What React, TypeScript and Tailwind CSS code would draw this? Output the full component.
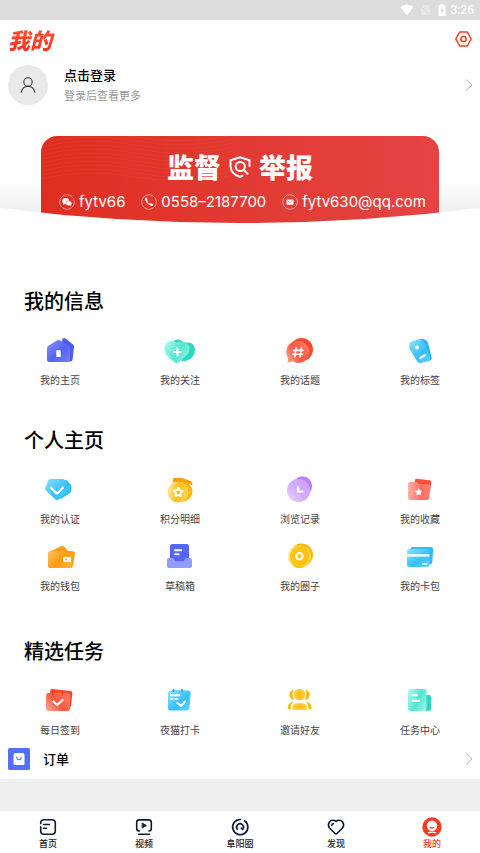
import React from 'react';

interface Entry {
  label: string;
  icon: React.ReactNode;
}

interface Section {
  title: string;
  spacing: string;
  entries: Entry[];
}

const Gradients: React.FC = () => (
  <svg className="absolute w-0 h-0" aria-hidden="true">
    <defs>
      <linearGradient id="blue" x1="0" y1="0" x2="1" y2="1"><stop offset="0" stopColor="#8a93fb" /><stop offset="0.55" stopColor="#5562f2" /><stop offset="1" stopColor="#7580fb" /></linearGradient>
      <linearGradient id="mint" x1="0" y1="0.2" x2="1" y2="0.7"><stop offset="0" stopColor="#a5f8e8" /><stop offset="0.55" stopColor="#53e5d0" /><stop offset="1" stopColor="#8df5e4" /></linearGradient>
      <linearGradient id="red" x1="0" y1="0.8" x2="1" y2="0.2"><stop offset="0" stopColor="#ff9d90" /><stop offset="0.45" stopColor="#fb5840" /><stop offset="1" stopColor="#ff7a64" /></linearGradient>
      <linearGradient id="pink" x1="0" y1="0.5" x2="1" y2="0.5"><stop offset="0" stopColor="#ffb0a8" /><stop offset="0.6" stopColor="#fd6d62" /><stop offset="1" stopColor="#ff8078" /></linearGradient>
      <linearGradient id="sky" x1="0" y1="0" x2="1" y2="1"><stop offset="0" stopColor="#8ce3ff" /><stop offset="0.6" stopColor="#35bff8" /><stop offset="1" stopColor="#5fd4ff" /></linearGradient>
      <linearGradient id="gold" x1="0" y1="0.4" x2="1" y2="0.6"><stop offset="0" stopColor="#ffe9a4" /><stop offset="0.5" stopColor="#fdc115" /><stop offset="1" stopColor="#ffd65c" /></linearGradient>
      <radialGradient id="amber" cx="0.5" cy="0.5" r="0.6"><stop offset="0" stopColor="#fbb910" /><stop offset="1" stopColor="#ffd452" /></radialGradient>
      <linearGradient id="orange" x1="0" y1="0" x2="1" y2="0.6"><stop offset="0" stopColor="#ffc062" /><stop offset="0.6" stopColor="#fc9d10" /><stop offset="1" stopColor="#ffae30" /></linearGradient>
      <linearGradient id="violet" x1="0" y1="1" x2="1" y2="0"><stop offset="0" stopColor="#ead6ff" /><stop offset="0.5" stopColor="#d3abfb" /><stop offset="1" stopColor="#cb9cf9" /></linearGradient>
    </defs>
  </svg>
);

const EntryIcon: React.FC<{ children: React.ReactNode }> = ({ children }) => (
  <svg className="w-8 h-7" viewBox="0 0 32 28" fill="none" strokeLinecap="round" strokeLinejoin="round" aria-hidden="true">{children}</svg>
);

const sections: Section[] = [
  {
    title: '我的信息',
    spacing: 'mb-[38px]',
    entries: [
      {
        label: '我的主页',
        icon: (
          <EntryIcon>
            <path d="M18.5 1.6Q20 0.6 21.5 1.6L29 7.6Q30.2 8.6 30 10L28.6 22.5Q28.3 24.5 26.5 24.5H16Z" fill="#4f5ae8" />
            <path d="M12.8 3.6Q14.5 2.6 16.2 3.6L24.6 8.8Q26 9.7 26 11.3V22.5Q26 25 23.5 25H5.5Q3 25 3 22.5V11.3Q3 9.7 4.4 8.8Z" fill="url(#blue)" />
            <rect x="12.3" y="13.3" width="4.4" height="6.8" rx="0.6" fill="#fff" />
          </EntryIcon>
        ),
      },
      {
        label: '我的关注',
        icon: (
          <EntryIcon>
            <path d="M9 4.5Q12 1.5 16.5 3L20 6.5Q26 4 29.5 8Q32.5 12.5 29.5 18.5Q27 23.5 18 24.5Z" fill="#2ed8bf" />
            <path d="M13 6C9.5 3 4.5 3.6 2 7C-0.5 10.5 0 15 3 18.5L10.5 25.3Q12.8 27 15 25.3L22.5 18.5C26 15 26.3 10 23.5 7C20.5 3.5 16 3.3 13 6Z" fill="url(#mint)" />
            <path d="M13.5 11.5V18.5M10 15H17" stroke="#fff" strokeWidth="2.2" />
          </EntryIcon>
        ),
      },
      {
        label: '我的话题',
        icon: (
          <EntryIcon>
            <circle cx="17.5" cy="12.5" r="11.5" fill="#f8492c" />
            <path d="M13.5 4A11 11 0 1 1 8.5 24.3Q6 25.8 3.2 25.6Q4.4 23.5 3.9 20.8A11 11 0 0 1 13.5 4Z" fill="url(#red)" />
            <path d="M12.2 10.5L10.7 20M17.5 10.5L16 20M9.4 13.4H19.2M8.8 17.2H18.6" stroke="#fff" strokeWidth="1.6" />
          </EntryIcon>
        ),
      },
      {
        label: '我的标签',
        icon: (
          <EntryIcon>
            <path d="M14 3.5Q17.5 1 21.5 3Q23.5 4 24 6L27.6 20.5Q28 23 25.5 23.7L17 25.5Z" fill="#25b3f2" />
            <path d="M7.3 4.7L14.5 2.3Q16.3 1.8 17.5 3L21 6.5Q21.7 7.2 22 8.3L26 21Q26.5 23.2 24.5 24L16.5 26Q14.3 26.4 13.3 24.5L5.7 12Q5 10.8 5.2 9.5L5.8 6.3Q6 5.1 7.3 4.7Z" fill="url(#sky)" />
            <circle cx="13" cy="10.5" r="2" fill="#fff" />
            <path d="M16.2 21L20.6 18.4" stroke="#fff" strokeWidth="2.2" />
          </EntryIcon>
        ),
      },
    ],
  },
  {
    title: '个人主页',
    spacing: 'mb-[43px]',
    entries: [
      {
        label: '我的认证',
        icon: (
          <EntryIcon>
            <path d="M13 4H21Q22.5 4 23.5 5L27 9Q27.7 10 27.6 11.5L27.3 14.5Q27.2 16 26 17L18.5 22Q16 23.5 14 22Z" fill="#2cc4ee" />
            <path d="M6 3H18.5Q20 3 21 4.2L25 10.5Q25.7 12 24.5 13.3L15 23.5Q13.2 25 11.4 23.5L1.8 14.5Q0.7 13.3 1.3 12L4 4.5Q4.6 3 6 3Z" fill="url(#sky)" />
            <path d="M7 11.5L11.8 16.7Q13 17.8 14.2 16.7L19 11.5" stroke="#fff" strokeWidth="2.3" />
          </EntryIcon>
        ),
      },
      {
        label: '积分明细',
        icon: (
          <EntryIcon>
            <path d="M9.5 2H18.5L27.5 5.5Q28.8 6.2 28.2 9L23 7.5L8.2 5.5Z" fill="#fb9d12" />
            <circle cx="18.5" cy="15.5" r="10" fill="#fcb80c" />
            <circle cx="14" cy="16" r="10.5" fill="url(#gold)" />
            <path d="M14.3 11.7L15.7 14.2L18.5 14.9L16.7 17.1L17 20L14.3 18.9L11.5 20L11.9 17.1L10 14.9L12.8 14.2Z" stroke="#fff" strokeWidth="1.9" />
          </EntryIcon>
        ),
      },
      {
        label: '浏览记录',
        icon: (
          <EntryIcon>
            <circle cx="18.5" cy="10" r="9.7" fill="#b981f3" />
            <circle cx="14.5" cy="14.5" r="11.5" fill="url(#violet)" />
            <path d="M14 11V15.5H18.6" stroke="#fff" strokeWidth="2.2" />
          </EntryIcon>
        ),
      },
      {
        label: '我的收藏',
        icon: (
          <EntryIcon>
            <path d="M12.5 2.8L25.5 4.3Q27.5 4.6 27.3 6.5L26 16L10.5 9L11 4Q11.3 2.7 12.5 2.8Z" fill="#f94f3c" />
            <path d="M6 6H12Q13.2 6 14 6.9L15 8H24.5Q26.3 8 26.2 10L25.5 22Q25.3 24 23.3 24H6Q4 24 4 22V8Q4 6 6 6Z" fill="url(#pink)" />
            <path d="M14.7 12.7L15.7 14.8L18 15.1L16.3 16.7L16.8 19L14.7 17.9L12.6 19L13.1 16.7L11.4 15.1L13.7 14.8Z" fill="#fff" stroke="#fff" strokeWidth="0.6" />
          </EntryIcon>
        ),
      },
      {
        label: '我的钱包',
        icon: (
          <EntryIcon>
            <path d="M5 9L17 3.3Q19 2.4 20.5 3.8L24 8L29 8.3Q31.2 8.6 31 10.7L29 22.5Q28.7 25 26 25H10Z" fill="#fb9d12" />
            <path d="M6 8.3H26.5Q28.7 8.3 28.5 10.5L28 23Q27.8 25 25.8 25H6Q4 25 4 23V10.3Q4 8.3 6 8.3Z" fill="url(#orange)" />
            <path d="M20.5 14H27V19H20.5Q19.2 19 19.2 17.7V15.3Q19.2 14 20.5 14Z" fill="#fff" />
            <circle cx="22.2" cy="16.5" r="1" fill="#fba21d" />
          </EntryIcon>
        ),
      },
      {
        label: '草稿箱',
        icon: (
          <EntryIcon>
            <rect x="6" y="1" width="19" height="20" rx="2.5" fill="#5665f6" />
            <path d="M5 15H8.5Q9.5 15 10 16L10.6 17.3Q11 18.2 12 18.2H19Q20 18.2 20.4 17.3L21 16Q21.5 15 22.5 15H26Q28 15 28 17V23Q28 25 26 25H5Q3 25 3 23V17Q3 15 5 15Z" fill="#929cfc" />
            <path d="M11 7.2H17.3M11 11.2H14.7" stroke="#fff" strokeWidth="1.9" />
          </EntryIcon>
        ),
      },
      {
        label: '我的圈子',
        icon: (
          <EntryIcon>
            <circle cx="17.5" cy="12" r="11.5" fill="#fbb80a" />
            <circle cx="15.5" cy="13.5" r="11.5" fill="url(#gold)" />
            <circle cx="15.5" cy="13.2" r="9.5" fill="#fec414" />
            <circle cx="15.5" cy="13.2" r="3.2" stroke="#fff" strokeWidth="2" />
          </EntryIcon>
        ),
      },
      {
        label: '我的卡包',
        icon: (
          <EntryIcon>
            <path d="M9 4H27Q29.2 4 29.1 6.3L28.3 19Q28 21.2 26 21.5L8 22L6 7Q6.5 4 9 4Z" fill="#2dbcf5" />
            <rect x="3" y="6" width="22.5" height="18" rx="2.5" fill="url(#sky)" />
            <path d="M3 11.2H25.5V13.6H3Z" fill="#fff" />
            <path d="M18 20H23.3V21.8H18Z" fill="#fff" />
          </EntryIcon>
        ),
      },
    ],
  },
  {
    title: '精选任务',
    spacing: 'mb-0.5',
    entries: [
      {
        label: '每日签到',
        icon: (
          <EntryIcon>
            <path d="M8 2L26.5 4Q28.6 4.3 28.4 6.5L27 19Q26.5 21 24.5 21L6 17L6.2 4Q6.4 2 8 2Z" fill="#f8492c" />
            <rect x="2" y="6" width="24" height="18" rx="2.8" fill="url(#red)" />
            <path d="M8.7 4.5V7.5M18.5 4.5V7.5" stroke="#e93b20" strokeWidth="1.6" />
            <path d="M9.5 14.5L13.2 18L18.5 13" stroke="#fff" strokeWidth="2.2" />
          </EntryIcon>
        ),
      },
      {
        label: '夜猫打卡',
        icon: (
          <EntryIcon>
            <path d="M8 3L25 3.5Q27 3.7 26.8 6L25.5 21Q25 23 23 23H8Z" fill="#5acdfa" />
            <rect x="4" y="4" width="21" height="19.5" rx="2.5" fill="url(#sky)" />
            <path d="M9.5 2.5V4.5M18 2.5V4.5" stroke="#1ba9e8" strokeWidth="1.6" />
            <path d="M7 8.2H15.3M7 12H8.5M11.5 12H13.5" stroke="#fff" strokeWidth="1.9" />
            <path d="M13.5 16L17 19L21 14.5" stroke="#fff" strokeWidth="2.1" />
          </EntryIcon>
        ),
      },
      {
        label: '邀请好友',
        icon: (
          <EntryIcon>
            <path d="M9 3.3Q5.5 4.5 5.7 8Q5.9 11.5 9.6 13Q7.5 8 9 3.3ZM22 3.3Q25.6 4.5 25.4 8Q25.2 11.5 21.5 13Q23.5 8 22 3.3Z" fill="#f9b80d" stroke="#f9b80d" strokeWidth="0.6" />
            <rect x="10" y="2" width="11.2" height="11.5" rx="5" fill="url(#amber)" />
            <path d="M11.5 16.2H19.5Q22.3 17 23 20.5V22Q22.8 23 21.5 23H9.7Q8.4 23 8.2 22V20.5Q8.8 17 11.5 16.2Z" fill="url(#amber)" />
            <path d="M8.2 15.2Q4.3 16 4 20.5Q4 22.5 6.2 22.3Q6.2 18 8.2 15.2ZM23 15.2Q27 16 27.3 20.5Q27.3 22.5 25 22.3Q25 18 23 15.2Z" fill="#f9b80d" stroke="#f9b80d" strokeWidth="0.6" />
          </EntryIcon>
        ),
      },
      {
        label: '任务中心',
        icon: (
          <EntryIcon>
            <path d="M19 8H25Q27.2 8 27.2 10.2V21.5Q27.2 23.7 25 23.7H18Z" fill="#2fd6bd" />
            <rect x="4" y="2" width="18.5" height="22" rx="2.2" fill="url(#mint)" />
            <path d="M8.7 8.2H13M8.7 13.8H15.2" stroke="#fff" strokeWidth="2.1" />
          </EntryIcon>
        ),
      },
    ],
  },
];

const NavIcon: React.FC<{ children: React.ReactNode }> = ({ children }) => (
  <svg className="w-5 h-5" viewBox="0 0 20 20" fill="none" stroke="#111a33" strokeWidth="1.6" strokeLinecap="round" strokeLinejoin="round" aria-hidden="true">{children}</svg>
);

const tabs = [
  {
    label: '首页',
    active: false,
    icon: (
      <NavIcon>
        <path d="M2.7 6.5V6Q2.7 2.7 6 2.7H14Q17.3 2.7 17.3 6V14Q17.3 17.3 14 17.3H6Q2.7 17.3 2.7 14V9.8M5.5 7.5H11.5M5.5 11.3H8.5" />
      </NavIcon>
    ),
  },
  {
    label: '视频',
    active: false,
    icon: (
      <NavIcon>
        <path d="M5.5 14H5Q2.7 14 2.7 11.5V5.5Q2.7 2.9 5.3 2.9H14.7Q17.3 2.9 17.3 5.5V11.5Q17.3 14 15 14M4.5 17.2H15.5" />
        <path d="M8.5 6.2L12.3 8.5L8.5 10.8Z" fill="#111a33" strokeWidth="1" />
      </NavIcon>
    ),
  },
  {
    label: '阜阳圈',
    active: false,
    icon: (
      <NavIcon>
        <path d="M10.5 2.5A7.6 7.6 0 1 0 14.5 3.8" strokeWidth="1.7" />
        <path d="M7.3 12.2A3.4 3.4 0 1 1 12.6 12.4L11.2 11" />
      </NavIcon>
    ),
  },
  {
    label: '发现',
    active: false,
    icon: (
      <NavIcon>
        <path d="M10 4.5L8.8 3.6Q5.5 2.4 3.4 5Q1.5 8 3.3 10.8L9 16.5Q10 17.3 11 16.5L16.7 10.8Q18.6 8 16.6 5Q14.5 2.4 11.2 3.6L10 4.5M5.7 8.5Q5.9 6.8 7.4 6.6" />
      </NavIcon>
    ),
  },
  {
    label: '我的',
    active: true,
    icon: (
      <svg className="w-5 h-5" viewBox="0 0 20 20" fill="none" strokeLinecap="round" aria-hidden="true">
        <circle cx="10" cy="10" r="9.7" fill="#fb3a20" />
        <circle cx="10" cy="8.8" r="5.2" fill="#fff" />
        <path d="M8.2 10.3Q10 11.8 11.8 10.3" stroke="#fb3a20" strokeWidth="1.2" />
        <path d="M6.5 15.7Q10 14.7 13.5 15.7" stroke="#fff" strokeWidth="1.3" />
      </svg>
    ),
  },
];

const Chevron: React.FC = () => (
  <svg className="w-2 h-3 shrink-0" viewBox="0 0 8 12" fill="none" stroke="#b5b5b5" strokeWidth="1" aria-hidden="true">
    <path d="M1 0.5L7 6L1 11.5" />
  </svg>
);

const StatusBar: React.FC = () => (
  <div className="h-5 bg-[#dcdcdc] flex items-center justify-end pr-1.5 text-white">
    <svg className="w-3.5 h-3 mr-1.5" viewBox="0 0 14 12" fill="#fff" aria-hidden="true"><path d="M0.5 3Q7 -2 13.5 3L7 11.5Z" /></svg>
    <svg className="w-2.5 h-3 mr-2" viewBox="0 0 10 12" aria-hidden="true">
      <path d="M4 1H9.5V11H1V4Z" fill="#e6e6e6" />
      <path d="M1 2L9 11" stroke="#d5d5d5" />
    </svg>
    <svg className="w-2 h-3 mr-1" viewBox="0 0 8 12" aria-hidden="true">
      <path d="M2.5 0H5.5V1.2H7.5V12H0.5V1.2H2.5Z" fill="#fff" />
      <path d="M4.8 3L2.3 7H4L3.4 10L5.9 6H4.2Z" fill="#d0d0d0" />
    </svg>
    <span className="font-['Roboto',sans-serif] text-xs leading-5 font-medium">3:26</span>
  </div>
);

const Banner: React.FC = () => (
  <section className="pb-[26px]">
    <div className="pt-[26px] bg-linear-to-b from-white from-60% to-[#e8e8e8]">
      <div className="relative overflow-hidden mx-[41px] rounded-t-[16px] bg-linear-to-r from-[#df2e20] to-[#e44443] text-white pt-[15px] pb-[13px]">
        <svg className="absolute left-0 top-0 w-1/2 h-11" viewBox="0 0 200 44" preserveAspectRatio="none" fill="none" stroke="#f0552f" strokeOpacity="0.35" strokeWidth="0.6" aria-hidden="true">
          {[0, 4, 8, 12, 16, 20, 24, 28, 32, 36, 40].map((y) => (
            <path key={y} d={`M0 ${y + 3}Q45 ${y - 8} 95 ${y + 1}T200 ${y - 2}`} />
          ))}
        </svg>
        <h2 className="relative flex items-center justify-center gap-2 text-[27px] leading-8 font-black">
          <span>监督</span>
          <svg className="w-[22px] h-[22px]" viewBox="0 0 22 22" fill="none" stroke="#fff" strokeWidth="2" strokeLinecap="round" strokeLinejoin="round" aria-hidden="true">
            <path d="M20.5 10V4.3L11 1.2L1.5 4.3V10Q1.5 17.8 11 21L13.5 19.7" />
            <circle cx="11.3" cy="10.5" r="4.6" />
            <path d="M14.7 14L18.5 17.8" />
          </svg>
          <span>举报</span>
        </h2>
        <div className="relative mt-2 pl-[18px] pr-[13px] flex justify-between font-['Inter','Liberation_Sans',sans-serif] text-[15px] leading-[22px]">
          <span className="flex items-center gap-1">
            <svg className="w-4 h-4" viewBox="0 0 16 16" fill="none" aria-hidden="true">
              <circle cx="8" cy="8" r="7.3" stroke="#fff" strokeOpacity="0.6" strokeWidth="0.8" />
              <ellipse cx="6.7" cy="7" rx="3.5" ry="3" fill="#fff" />
              <ellipse cx="9.8" cy="9.3" rx="3" ry="2.5" fill="#fff" stroke="#e0352a" strokeWidth="0.5" />
              <path d="M4.5 9L4.3 11L6.5 9.7M11 11L12.2 12.2L12 10.5" fill="#fff" />
            </svg>
            fytv66
          </span>
          <span className="flex items-center gap-1">
            <svg className="w-4 h-4" viewBox="0 0 16 16" fill="none" aria-hidden="true">
              <circle cx="8" cy="8" r="7.3" stroke="#fff" strokeOpacity="0.6" strokeWidth="0.8" />
              <path d="M5 5.2Q5.5 9.8 10.8 11" stroke="#fff" strokeWidth="1.3" />
              <path d="M5 4.5L5.6 6.5M9.4 10.4L11.3 11" stroke="#fff" strokeWidth="2" strokeLinecap="round" />
            </svg>
            0558–2187700
          </span>
          <span className="flex items-center gap-1">
            <svg className="w-4 h-4" viewBox="0 0 16 16" fill="none" aria-hidden="true">
              <circle cx="8" cy="8" r="7.3" stroke="#fff" strokeOpacity="0.6" strokeWidth="0.8" />
              <rect x="4.5" y="5.5" width="7" height="5.2" rx="0.7" fill="#fff" />
              <path d="M5.5 6.5L8 8.5L10.5 6.5" stroke="#e0352a" strokeWidth="0.5" />
            </svg>
            fytv630@qq.com
          </span>
        </div>
      </div>
    </div>
    {/* white arc that closes off the lower edge of the card */}
    <svg className="relative block w-full h-[52px] -mt-[18px]" viewBox="0 0 480 52" preserveAspectRatio="none" aria-hidden="true">
      <path d="M0 0Q240 30 480 0V52H0Z" fill="#fff" />
    </svg>
  </section>
);

const App: React.FC = () => (
  <div className="min-h-screen flex flex-col bg-white text-black font-['Noto_Sans_CJK_SC',sans-serif]">
    <Gradients />
    <StatusBar />
    <header className="h-10 px-2 pb-0.5 flex items-center justify-between">
      <h1 className="pr-1 text-[22px] leading-8 font-black italic text-transparent bg-clip-text bg-linear-to-b from-[#ff5a3c] to-[#f5290f]">我的</h1>
      <button type="button" aria-label="设置">
        <svg className="w-[17px] h-4" viewBox="0 0 17 16" fill="none" stroke="#fb3a20" strokeWidth="1.5" strokeLinejoin="round">
          <path d="M4.7 1H12.3L16.2 8L12.3 15H4.7L0.8 8Z" />
          <circle cx="8.5" cy="8" r="2.6" />
        </svg>
      </button>
    </header>

    <button type="button" className="h-[50px] pl-2 pr-[7px] flex items-center text-left">
      <span className="w-10 h-10 rounded-full bg-[#e9e9e9] flex items-center justify-center">
        <svg className="w-4 h-4" viewBox="0 0 16 16" fill="none" stroke="#333" strokeWidth="1.1" strokeLinecap="round" aria-hidden="true">
          <circle cx="8" cy="5" r="4.2" />
          <path d="M1.2 15.3Q2.2 9.3 8 9.2Q13.8 9.3 14.8 15.3" />
        </svg>
      </span>
      <span className="ml-4 flex-1 flex flex-col">
        <span className="text-[13px] leading-5 font-medium">点击登录</span>
        <span className="text-[11px] leading-5 text-[#999]">登录后查看更多</span>
      </span>
      <Chevron />
    </button>

    <Banner />

    <main>
      {sections.map((section) => (
        <section key={section.title} className={section.spacing}>
          <h2 className="pl-6 text-xl leading-[30px] font-medium">{section.title}</h2>
          <div className="mt-[21px] grid grid-cols-4 gap-y-[17px]">
            {section.entries.map((entry) => (
              <button key={entry.label} type="button" className="flex flex-col items-center gap-2">
                {entry.icon}
                <span className="text-[10px] leading-[14px] text-[#444]">{entry.label}</span>
              </button>
            ))}
          </div>
        </section>
      ))}
    </main>

    <button type="button" className="h-10 pl-2 pr-[7px] flex items-center text-left">
      <svg className="w-[22px] h-[22px]" viewBox="0 0 22 22" fill="none" aria-hidden="true">
        <rect width="22" height="22" rx="1.5" fill="#5470fb" />
        <path d="M6.7 5H15.3L16.5 6.7V15.5Q16.5 17 15 17H7Q5.5 17 5.5 15.5V6.7Z" fill="#fff" />
        <path d="M8.7 9.3Q9 11.7 11 11.7Q13 11.7 13.3 9.3" stroke="#5470fb" strokeWidth="1.2" strokeLinecap="round" />
      </svg>
      <span className="ml-[13px] flex-1 text-[13px] leading-5 font-medium">订单</span>
      <Chevron />
    </button>

    <div className="flex-1 min-h-8 bg-[#efefef]" />

    <nav className="grid grid-cols-5 pt-[5px] pb-[3px] border-t border-[#f5f5f5]">
      {tabs.map((tab) => (
        <a key={tab.label} href="#" aria-current={tab.active ? 'page' : undefined} className="flex flex-col items-center">
          {tab.icon}
          <span className={`text-[9px] leading-[13px] font-medium ${tab.active ? 'text-[#fb3a20]' : 'text-[#222]'}`}>{tab.label}</span>
        </a>
      ))}
    </nav>
  </div>
);

export default App;
